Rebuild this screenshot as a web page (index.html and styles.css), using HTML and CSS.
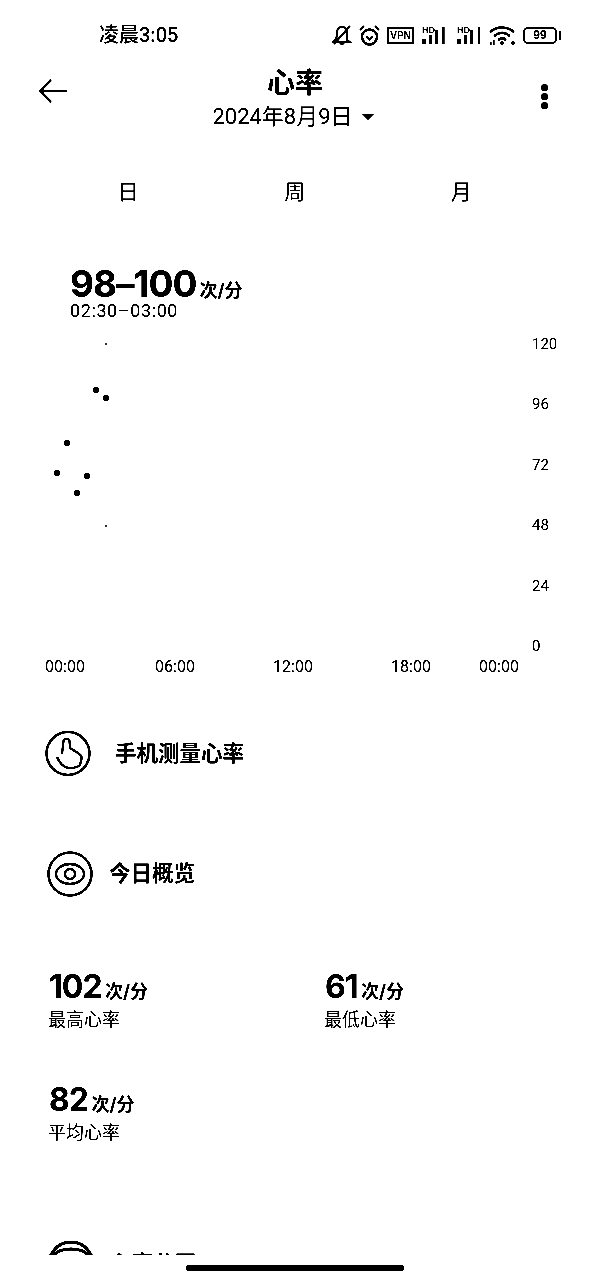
FILE: index.html
```html
<!DOCTYPE html>
<html>
<head>
	<title>心率</title>
	<meta charset="UTF-8">
	<link rel="stylesheet" href="styles.css">
</head>
<body>
	<div id="page">
		<div id="content">
			<div id="status">
				<span id="clock">凌晨3:05</span>
				<div id="status-icons">
					<svg width="20" height="22" viewBox="0 0 20 22"><path d="M3 16c2-2 2-4 2-7 0-4 2-6 5-6s5 2 5 6v7l3 2H1z M2 20 18 2 M8 19a2.500 2.500 0 0 0 4 0" fill="none" stroke="#000" stroke-width="2"/></svg>
					<svg width="21" height="22" viewBox="0 0 21 22"><circle cx="10.500" cy="13" r="7.500" fill="none" stroke="#000" stroke-width="2.500"/><path d="M7 12.500l3.500 3 3.500-3M1 6l4-4M20 6l-4-4" fill="none" stroke="#000" stroke-width="2"/></svg>
					<span id="vpn">VPN</span>
					<svg width="28" height="22" viewBox="0 0 28 22"><text x="1" y="9" class="hd">HD</text><path d="M1 15h4v5H1zM8 11h3v9H8zM14 6h3v14h-3zM21 3h2.500v17H21z"/></svg>
					<svg width="26" height="22" viewBox="0 0 26 22"><text x="1" y="9" class="hd">HD</text><path d="M1 15h4v5H1zM8 11h3v9H8zM14 6h3v14h-3zM22 3h2v17h-2z"/></svg>
					<svg width="27" height="22" viewBox="0 0 27 22"><path d="M1 8c7-6 17-6 24 0M5 12c5-4 11-4 16 0M9 16c3-2 6-2 8 0" fill="none" stroke="#000" stroke-width="2.500"/><circle cx="13" cy="19" r="2"/><circle cx="24" cy="19" r="2"/><path d="M1 18h1.500v3H1zM4 16h1.500v5H4z"/></svg>
					<div id="battery"><span>99</span></div>
				</div>
			</div>

			<div id="header">
				<svg class="back" width="32" height="26" viewBox="0 0 32 26"><path d="M30 13H3M14 2 3 13l11 11" fill="none" stroke="#000" stroke-width="2.500"/></svg>
				<div class="head-mid">
					<h1>心率</h1>
					<div class="date">2024年8月9日<i class="caret"></i></div>
				</div>
				<div class="more"><i></i><i></i><i></i></div>
			</div>

			<ul id="tabs">
				<li>日</li>
				<li>周</li>
				<li>月</li>
			</ul>

			<div id="range">
				<div class="range-num">98–100<span>次/分</span></div>
				<div class="range-time">02:30–03:00</div>
			</div>

			<div id="chart">
				<div class="y-axis">
					<span>120</span><span>96</span><span>72</span><span>48</span><span>24</span><span>0</span>
				</div>
				<i class="tick" style="left:106px;top:13px"></i>
				<i class="dot" style="left:96px;top:59px"></i>
				<i class="dot" style="left:106px;top:67px"></i>
				<i class="dot" style="left:67px;top:112px"></i>
				<i class="dot" style="left:57px;top:142px"></i>
				<i class="dot" style="left:87px;top:145px"></i>
				<i class="dot" style="left:77px;top:162px"></i>
				<i class="tick" style="left:106px;top:195px"></i>
				<span class="x-label" style="left:65px">00:00</span>
				<span class="x-label" style="left:175px">06:00</span>
				<span class="x-label" style="left:293px">12:00</span>
				<span class="x-label" style="left:411px">18:00</span>
				<span class="x-label" style="left:499px">00:00</span>
			</div>

			<div class="section measure">
				<svg width="46" height="46" viewBox="0 0 46 46"><circle cx="23" cy="22.500" r="21.500" fill="none" stroke="#000" stroke-width="2.500"/><path d="M17 23l1.500-13c.5-3 5.500-3 6 0l.5 7 8 5c3 2 4 4 3.500 6l-1.500 6c-3 3-7 3-10 3-5 0-10-4-13-11" fill="none" stroke="#000" stroke-width="2.200"/></svg>
				<h2>手机测量心率</h2>
			</div>

			<div class="section today">
				<svg width="46" height="46" viewBox="0 0 46 46"><circle cx="23" cy="23" r="21.500" fill="none" stroke="#000" stroke-width="2.500"/><ellipse cx="23" cy="23" rx="14" ry="10" fill="none" stroke="#000" stroke-width="2.500"/><circle cx="23" cy="23" r="5" fill="none" stroke="#000" stroke-width="2.500"/></svg>
				<h2>今日概览</h2>
			</div>

			<div id="stats">
				<div class="stat">
					<div class="num">102<span>次/分</span></div>
					<div class="label">最高心率</div>
				</div>
				<div class="stat">
					<div class="num">61<span>次/分</span></div>
					<div class="label">最低心率</div>
				</div>
				<div class="stat">
					<div class="num">82<span>次/分</span></div>
					<div class="label">平均心率</div>
				</div>
			</div>

			<div class="section zones">
				<svg width="46" height="46" viewBox="0 0 46 46"><circle cx="23" cy="23" r="22" fill="none" stroke="#000" stroke-width="3"/><path d="M6 14C12 6 34 6 40 14" fill="none" stroke="#000" stroke-width="3"/></svg>
				<h2>心率分区</h2>
			</div>
		</div>

		<div id="home-bar"></div>
	</div>
</body>
</html>
```
FILE: styles.css
```css
*{
	margin: 0;
	padding: 0;
}
ul{
	list-style: none;
}
body{
	background: #fff;
	color: #000;
	font-family: "Roboto", "Noto Sans CJK SC", sans-serif;
}
#page{
	width: 590px;
	height: 1280px;
	position: relative;
	overflow: hidden;
	background: #fff;
	filter: brightness(.9) contrast(6);
}
#content{
	height: 1255px;
	overflow: hidden;
}

/* status bar */
#status{
	height: 68px;
	box-sizing: border-box;
	padding: 2px 33px 0 99px;
	display: flex;
	align-items: center;
	justify-content: space-between;
}
#clock{
	font-size: 20px;
	font-weight: 500;
	line-height: 24px;
}
#status-icons{
	display: flex;
	align-items: center;
	gap: 7px;
}
#vpn{
	width: 27px;
	height: 17px;
	box-sizing: border-box;
	border: 2px solid #000;
	font: bold 10px/13px "Liberation Sans", sans-serif;
	text-align: center;
}
.hd{
	font: bold 9px "Liberation Sans", sans-serif;
}
#battery{
	width: 34px;
	height: 17px;
	box-sizing: border-box;
	border: 2px solid #000;
	border-radius: 5px;
	position: relative;
	font: bold 12px/13px "Liberation Sans", sans-serif;
	text-align: center;
}
#battery:after{
	content: "";
	position: absolute;
	right: -6px;
	top: 2px;
	width: 2px;
	height: 9px;
	background: #000;
}

/* header */
#header{
	height: 64px;
	display: grid;
	grid-template-columns: 1fr auto 1fr;
	padding: 0 41px 0 37px;
}
.back{
	margin-top: 10px;
}
.head-mid{
	text-align: center;
}
h1{
	font-size: 28px;
	line-height: 32px;
	font-weight: 700;
	padding-left: 4px;
}
.date{
	font-size: 22px;
	line-height: 34px;
	white-space: nowrap;
}
.caret{
	display: inline-block;
	margin-left: 9px;
	border: 6px solid transparent;
	border-top: 6px solid #000;
	border-bottom: 0;
	vertical-align: 4px;
}
.more{
	width: 8px;
	margin-top: 16px;
	justify-self: end;
}
.more i{
	display: block;
	width: 7px;
	height: 7px;
	margin-bottom: 2px;
	border-radius: 50%;
	background: #000;
}

/* day week month */
#tabs{
	display: grid;
	grid-template-columns: repeat(3, 166.5px);
	padding-left: 45px;
	margin-top: 44px;
	font-size: 21px;
	line-height: 32px;
	text-align: center;
}

/* selected range */
#range{
	margin-top: 56px;
	padding-left: 70px;
}
.range-num{
	height: 40px;
	font-family: "Inter", "Noto Sans CJK SC", sans-serif;
	font-size: 37px;
	line-height: 40px;
	letter-spacing: -1px;
	font-weight: 700;
}
.range-num span{
	font-size: 18px;
	line-height: 1;
	letter-spacing: 0;
	margin-left: 3px;
}
.range-time{
	font-size: 18px;
	line-height: 20px;
	letter-spacing: .6px;
	margin-top: -3px;
}

/* chart */
#chart{
	height: 346px;
	margin-top: 10px;
	position: relative;
	font-size: 15px;
}
.y-axis{
	height: 322px;
	margin: 3px 33px 0 0;
	display: flex;
	flex-direction: column;
	justify-content: space-between;
	align-items: flex-start;
	float: right;
	width: 25px;
	line-height: 20px;
}
.dot,.tick{
	position: absolute;
	transform: translate(-50%, -50%);
	background: #000;
}
.dot{
	width: 6px;
	height: 6px;
	border-radius: 50%;
}
.tick{
	width: 1px;
	height: 2px;
}
.x-label{
	position: absolute;
	top: 326px;
	font-size: 16px;
	line-height: 20px;
	transform: translateX(-50%);
}

/* sections */
.section{
	display: flex;
	align-items: center;
}
h2{
	font-size: 21.500px;
	line-height: 46px;
	font-weight: 700;
}
.measure{
	margin-top: 54px;
	padding-left: 45px;
	gap: 24px;
}
.today{
	margin-top: 74px;
	padding-left: 47px;
	gap: 16px;
}

/* today's numbers */
#stats{
	display: grid;
	grid-template-columns: 276px 1fr;
	row-gap: 47px;
	margin-top: 70px;
	padding-left: 49px;
}
.num{
	height: 40px;
	font-family: "Inter", "Noto Sans CJK SC", sans-serif;
	font-size: 32px;
	line-height: 40px;
	letter-spacing: -1px;
	font-weight: 700;
}
.num span{
	font-size: 18px;
	line-height: 1;
	letter-spacing: 0;
	margin-left: 3.500px;
}
.label{
	font-size: 18px;
	line-height: 26px;
	margin-left: -1px;
}
.zones{
	margin-top: 95px;
	padding-left: 48px;
	gap: 16px;
}

#home-bar{
	position: absolute;
	left: 186px;
	top: 1265px;
	width: 218px;
	height: 6px;
	border-radius: 3px;
	background: #000;
}
```
